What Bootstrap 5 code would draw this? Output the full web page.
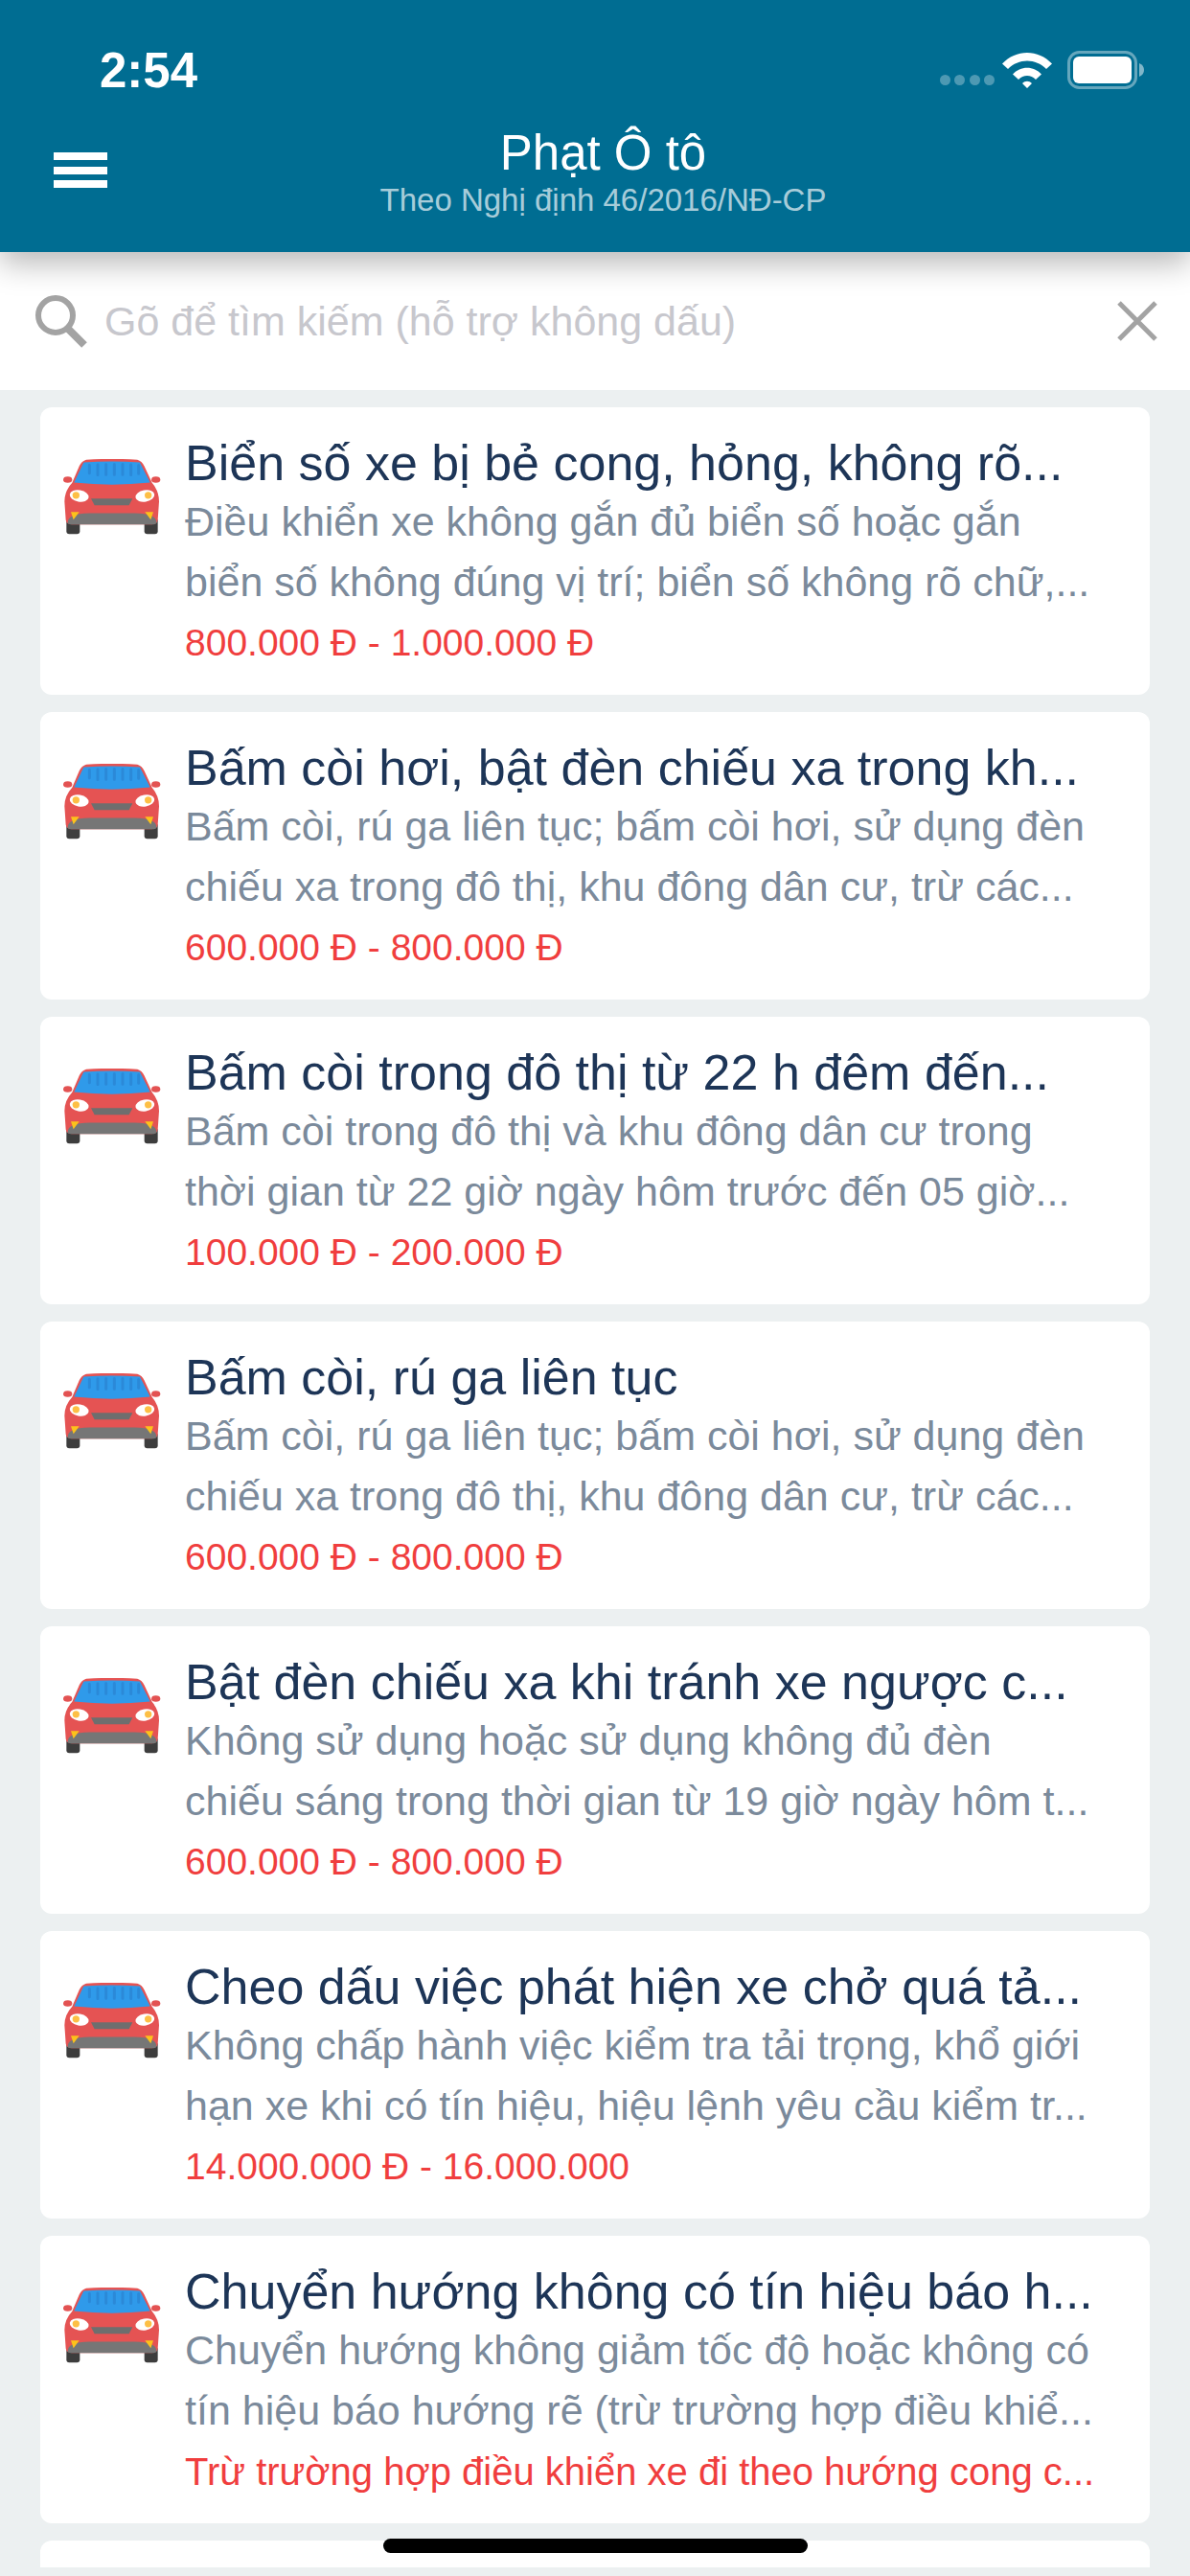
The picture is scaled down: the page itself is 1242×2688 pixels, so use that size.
<!DOCTYPE html>
<html lang="vi">
<head>
    <meta charset="UTF-8">
    <meta name="viewport" content="width=device-width, initial-scale=1.0">
    <title>Phạt Ô tô</title>
    <link href="https://cdn.jsdelivr.net/npm/bootstrap@5.3.0/dist/css/bootstrap.min.css" rel="stylesheet">
    <style>
        body { background: #ecf0f1; font-family: "Liberation Sans", Arial, sans-serif; }
        .phone { width: 1242px; height: 2688px; overflow: hidden; }
        .app-head { height: 263px; background: #006d92; color: #fff; box-shadow: 0 12px 30px rgba(0,0,0,.28); z-index: 2; }
        .status-row { height: 148px; padding: 54px 48px 0 104px; }
        .clock { font-size: 51px; line-height: 40px; font-weight: 700; }
        .sig-dot { width: 11px; height: 11px; border-radius: 50%; background: rgba(255,255,255,.3); }
        .sig-dots { gap: 4.500px; }
        .status-icons { margin-top: -1px; }
        .nav-row { margin-top: -17px; padding: 0 56px; }
        .nav-side { flex: 1 1 0; }
        .nav-main { margin-left: 17px; }
        .burger { width: 56px; height: 37px; margin-top: -5px; }
        .burger span { height: 8px; background: #fff; }
        .head-title { font-size: 51px; line-height: 58px; }
        .head-sub { font-size: 33px; line-height: 40px; color: rgba(255,255,255,.68); }
        .search-bar { height: 144px; background: #fff; padding: 0 34px 0 36px; }
        .search-text { font-size: 43px; color: #c7c7cd; margin-left: 17px; }
        .fine-list { height: 2272px; overflow: hidden; padding: 18px 42px 0; gap: 18px; }
        .fine-item { height: 300px; flex: none; border-radius: 12px; background: #fff; padding-left: 24px; padding-top: 29px; }
        .car-pic { width: 102px; height: 79px; margin-top: 25px; margin-right: 25px; flex: none; }
        .fine-title { font-size: 52px; line-height: 58px; color: #1d3557; white-space: nowrap; }
        .fine-desc { font-size: 43px; line-height: 63px; color: #7b8a9b; white-space: nowrap; }
        .fine-desc-first { margin-top: 1px; }
        .fine-price { font-size: 39px; line-height: 44px; margin-top: 10px; color: #f03e3e; white-space: nowrap; }
        .fine-note { font-size: 40px; }
        .home-bar { position: absolute; left: 400px; top: 2649px; width: 443px; height: 15px; border-radius: 8px; background: #000; z-index: 3; }
    </style>
</head>
<body>
    <svg width="0" height="0" class="position-absolute">
        <symbol id="car" viewBox="108 180 306 236">
            <rect x="118" y="365" width="42" height="49" rx="9" fill="#3d3d3d"/>
            <rect x="362" y="365" width="42" height="49" rx="9" fill="#3d3d3d"/>
            <ellipse cx="122" cy="244" rx="14" ry="10" fill="#e35252"/>
            <ellipse cx="398" cy="244" rx="14" ry="10" fill="#e35252"/>
            <path d="M180 182 Q260 176 340 182 Q354 186 362 202 L386 254 Q408 280 408 312 L404 370 Q402 384 386 384 L134 384 Q118 384 116 370 L112 312 Q112 280 136 254 L158 202 Q166 186 180 182Z" fill="#e55353"/>
            <path d="M172 190 Q260 184 348 190 L380 253 Q260 266 142 253Z" fill="#2f9aea"/>
            <path d="M190 198v26M216 197v32M242 196v32M268 196v32M294 196v32M320 197v32M344 199v26" stroke="#2b89d8" stroke-width="9" stroke-linecap="round"/>
            <ellipse cx="158" cy="295" rx="30" ry="18" transform="rotate(10 158 295)" fill="#fff"/>
            <ellipse cx="364" cy="295" rx="30" ry="18" transform="rotate(-10 364 295)" fill="#fff"/>
            <circle cx="148" cy="293" r="11" fill="#fdbf45"/>
            <circle cx="374" cy="293" r="11" fill="#fdbf45"/>
            <path d="M195 303H325L314 324H206Z" fill="#6e6e6e"/>
            <path d="M122 378 Q122 350 190 349H332Q400 350 400 378Q400 384 386 384H136Q122 384 122 378Z" fill="#767676"/>
            <path d="M132 345H158L140 369Z" fill="#fcc21b"/>
            <path d="M390 345H364L382 369Z" fill="#fcc21b"/>
        </symbol>
    </svg>

    <div class="phone position-relative d-flex flex-column">
        <div class="app-head position-relative flex-shrink-0">
            <div class="status-row d-flex justify-content-between align-items-start">
                <div class="clock">2:54</div>
                <div class="status-icons d-flex align-items-center">
                    <div class="sig-dots d-flex align-self-end mb-1 me-2">
                        <span class="sig-dot"></span><span class="sig-dot"></span><span class="sig-dot"></span><span class="sig-dot"></span>
                    </div>
                    <svg width="52" height="38" viewBox="0 0 52 38" class="me-3"><path d="M0 12.5C14-3 38-3 52 12.5L46 18C35 6.500 17 6.500 6 18Z M11 23.500C19 14.500 33 14.500 41 23.500L35 29C30 23.500 22 23.500 17 29Z M21 33C24 30 28 30 31 33L26 38Z" fill="#fff"/></svg>
                    <svg width="80" height="40" viewBox="0 0 80 40"><rect x="1.500" y="1.500" width="70" height="37" rx="11" fill="none" stroke="#fff" stroke-opacity=".4" stroke-width="3"/><rect x="6" y="6" width="61" height="28" rx="6" fill="#fff"/><path d="M75 13Q80 15 80 20T75 27Z" fill="#fff" fill-opacity=".5"/></svg>
                </div>
            </div>
            <div class="nav-row d-flex align-items-center">
                <div class="nav-side">
                    <div class="burger d-flex flex-column justify-content-between"><span></span><span></span><span></span></div>
                </div>
                <div class="nav-main text-center">
                    <div class="head-title">Phạt Ô tô</div>
                    <div class="head-sub">Theo Nghị định 46/2016/NĐ-CP</div>
                </div>
                <div class="nav-side"></div>
            </div>
        </div>

        <div class="search-bar d-flex align-items-center flex-shrink-0">
            <svg width="56" height="56" viewBox="0 0 56 56" fill="none" stroke="#a3a3a3"><circle cx="22" cy="22" r="18" stroke-width="6"/><path d="M34 35L52 53" stroke-width="8"/></svg>
            <div class="search-text flex-grow-1">Gõ để tìm kiếm (hỗ trợ không dấu)</div>
            <svg width="42" height="42" viewBox="0 0 42 42" stroke="#a3a3a3" stroke-width="5"><path d="M2 2L40 40M40 2L2 40"/></svg>
        </div>

        <div id="fine-list" class="fine-list d-flex flex-column"></div>
        <div class="home-bar"></div>
    </div>

    <script>
        const fines = [
            ['Biển số xe bị bẻ cong, hỏng, không rõ...', 'Điều khiển xe không gắn đủ biển số hoặc gắn', 'biển số không đúng vị trí; biển số không rõ chữ,...', '800.000 Đ - 1.000.000 Đ'],
            ['Bấm còi hơi, bật đèn chiếu xa trong kh...', 'Bấm còi, rú ga liên tục; bấm còi hơi, sử dụng đèn', 'chiếu xa trong đô thị, khu đông dân cư, trừ các...', '600.000 Đ - 800.000 Đ'],
            ['Bấm còi trong đô thị từ 22 h đêm đến...', 'Bấm còi trong đô thị và khu đông dân cư trong', 'thời gian từ 22 giờ ngày hôm trước đến 05 giờ...', '100.000 Đ - 200.000 Đ'],
            ['Bấm còi, rú ga liên tục', 'Bấm còi, rú ga liên tục; bấm còi hơi, sử dụng đèn', 'chiếu xa trong đô thị, khu đông dân cư, trừ các...', '600.000 Đ - 800.000 Đ'],
            ['Bật đèn chiếu xa khi tránh xe ngược c...', 'Không sử dụng hoặc sử dụng không đủ đèn', 'chiếu sáng trong thời gian từ 19 giờ ngày hôm t...', '600.000 Đ - 800.000 Đ'],
            ['Cheo dấu việc phát hiện xe chở quá tả...', 'Không chấp hành việc kiểm tra tải trọng, khổ giới', 'hạn xe khi có tín hiệu, hiệu lệnh yêu cầu kiểm tr...', '14.000.000 Đ - 16.000.000'],
            ['Chuyển hướng không có tín hiệu báo h...', 'Chuyển hướng không giảm tốc độ hoặc không có', 'tín hiệu báo hướng rẽ (trừ trường hợp điều khiể...', 'Trừ trường hợp điều khiển xe đi theo hướng cong c...', 'fine-note'],
            ['', '', '', '']
        ];

        document.getElementById('fine-list').innerHTML = fines.map(f => `
            <div class="fine-item d-flex">
                ${f[0] ? '<svg class="car-pic"><use href="#car"/></svg>' : ''}
                <div>
                    <div class="fine-title">${f[0]}</div>
                    <div class="fine-desc fine-desc-first">${f[1]}</div>
                    <div class="fine-desc">${f[2]}</div>
                    <div class="fine-price ${f[4] || ''}">${f[3]}</div>
                </div>
            </div>
        `).join('');
    </script>
    <script src="https://cdn.jsdelivr.net/npm/bootstrap@5.3.0/dist/js/bootstrap.bundle.min.js"></script>
</body>
</html>
